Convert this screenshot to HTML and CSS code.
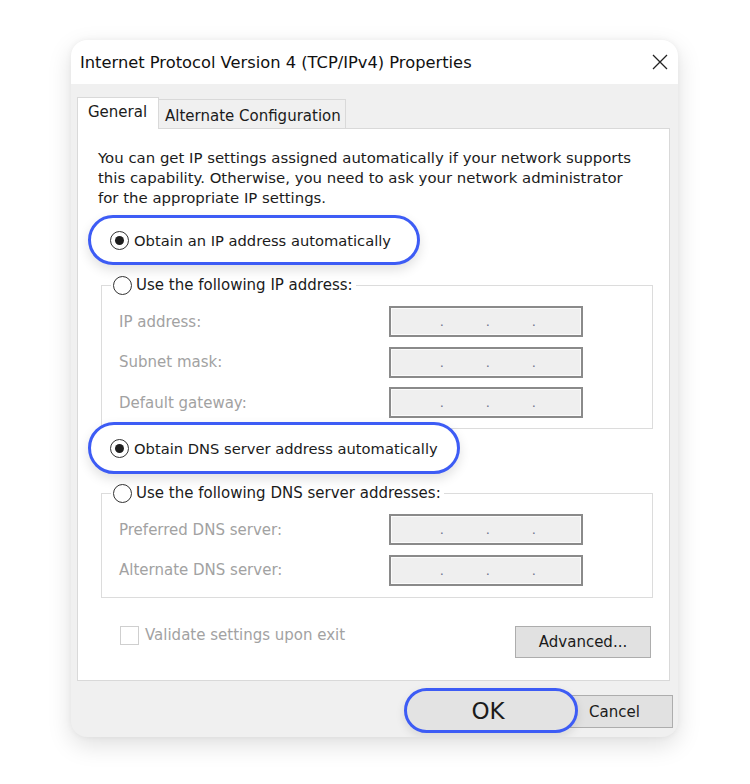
FILE: index.html
```html
<!DOCTYPE html>
<html>
<head>
<meta charset="utf-8">
<link rel="stylesheet" href="styles.css">
</head>
<body>
<div class="dialog">
  <div class="titlebar">
    <span class="title">Internet Protocol Version 4 (TCP/IPv4) Properties</span>
    <svg class="close" width="16" height="16" viewBox="0 0 16 16"><path d="M1 1 L15 15 M15 1 L1 15" stroke="#222" stroke-width="1.3" fill="none"/></svg>
  </div>
  <div class="body">
    <div class="tabs">
      <div class="tab tab-active">General</div>
      <div class="tab">Alternate Configuration</div>
    </div>
    <div class="panel">
      <p class="intro">You can get IP settings assigned automatically if your network supports<br>this capability. Otherwise, you need to ask your network administrator<br>for the appropriate IP settings.</p>

      <div class="pill pill-ip">
        <span class="radio radio-on"></span>
        <span class="pill-text">Obtain an IP address automatically</span>
      </div>

      <div class="group group-ip">
        <div class="legend">
          <span class="radio"></span>
          <span>Use the following IP address:</span>
        </div>
        <div class="field-row">
          <span class="label">IP address:</span>
          <div class="ipbox"><span>.</span><span>.</span><span>.</span></div>
        </div>
        <div class="field-row">
          <span class="label">Subnet mask:</span>
          <div class="ipbox"><span>.</span><span>.</span><span>.</span></div>
        </div>
        <div class="field-row">
          <span class="label">Default gateway:</span>
          <div class="ipbox"><span>.</span><span>.</span><span>.</span></div>
        </div>
      </div>

      <div class="pill pill-dns">
        <span class="radio radio-on"></span>
        <span class="pill-text">Obtain DNS server address automatically</span>
      </div>

      <div class="group group-dns">
        <div class="legend">
          <span class="radio"></span>
          <span>Use the following DNS server addresses:</span>
        </div>
        <div class="field-row">
          <span class="label">Preferred DNS server:</span>
          <div class="ipbox"><span>.</span><span>.</span><span>.</span></div>
        </div>
        <div class="field-row">
          <span class="label">Alternate DNS server:</span>
          <div class="ipbox"><span>.</span><span>.</span><span>.</span></div>
        </div>
      </div>

      <div class="bottom-row">
        <div class="check">
          <span class="checkbox"></span>
          <span class="check-label">Validate settings upon exit</span>
        </div>
        <div class="btn btn-adv">Advanced...</div>
      </div>
    </div>
    <div class="actions">
      <div class="btn-ok">OK</div>
      <div class="btn btn-cancel">Cancel</div>
    </div>
  </div>
</div>
</body>
</html>
```
FILE: styles.css
```css
* { box-sizing: border-box; }
html, body { margin: 0; padding: 0; background: #ffffff; }
body {
  font-family: "DejaVu Sans", "Noto Sans", sans-serif;
  font-size: 15px;
  color: #1b1b1b;
  width: 750px;
  height: 784px;
  overflow: hidden;
}
.dialog {
  margin: 40px 0 0 71px;
  width: 607px;
  height: 697px;
  border-radius: 16px;
  background: #f0f0f0;
  box-shadow: 0 8px 24px rgba(0,0,0,0.13), 0 0 6px rgba(0,0,0,0.05);
  overflow: hidden;
  display: flex;
  flex-direction: column;
}
.titlebar {
  height: 44px;
  background: #ffffff;
  display: flex;
  align-items: center;
  justify-content: space-between;
  padding: 0 10px 0 9px;
}
.title { font-size: 16.3px; color: #111; white-space: nowrap; }
.close { display: block; }
.body { padding: 13px 0 0 6px; display: flex; flex-direction: column; }
.tabs { display: flex; align-items: flex-end; height: 31px; }
.tab {
  height: 29px;
  width: 188px;
  border: 1px solid #d9d9d9;
  border-bottom: none;
  background: #f0f0f0;
  padding: 3px 0 0 6px;
  display: flex;
  align-items: center;
  margin-left: -1px;
  white-space: nowrap;
}
.tab-active {
  position: relative;
  z-index: 1;
  height: 32px;
  margin-bottom: -1px;
  margin-left: 0;
  width: 82px;
  background: #ffffff;
  padding: 0 0 3px 10px;
}
.panel {
  width: 593px;
  height: 553px;
  background: #ffffff;
  border: 1px solid #d9d9d9;
  display: flex;
  flex-direction: column;
}
.intro {
  margin: 19px 0 0 20px;
  line-height: 20px;
  font-size: 14.9px;
  white-space: nowrap;
}
.pill {
  position: relative;
  display: flex;
  align-items: center;
  margin-left: 10px;
  border: 3px solid #3d5cf5;
  border-radius: 27px;
  background: #ffffff;
  box-shadow: 0 5px 12px rgba(0,0,0,0.12);
  padding-left: 19px;
  white-space: nowrap;
}
.pill-ip { margin-top: 7px; width: 332px; height: 50px; }
.pill-dns { margin-top: -7px; width: 372px; height: 52px; }
.pill-text { margin-left: 5px; font-size: 14.7px; }
.radio {
  width: 19px;
  height: 19px;
  border-radius: 50%;
  border: 1.5px solid #333;
  background: #fff;
  display: flex;
  align-items: center;
  justify-content: center;
  flex: none;
}
.radio-on::after {
  content: "";
  width: 9px;
  height: 9px;
  border-radius: 50%;
  background: #1f1f1f;
}
.group {
  margin-left: 23px;
  width: 552px;
  border: 1px solid #dcdcdc;
  display: flex;
  flex-direction: column;
}
.group-ip { margin-top: 20px; height: 144px; }
.group-dns { margin-top: 19px; height: 105px; }
.legend {
  display: flex;
  align-items: center;
  gap: 4px;
  margin: -11px 0 0 9px;
  padding: 0 3px 0 2px;
  height: 20px;
  background: #fff;
  align-self: flex-start;
  white-space: nowrap;
}
.field-row {
  display: flex;
  align-items: center;
  height: 31px;
  padding-left: 17px;
  margin-top: 9.5px;
}
.group .legend + .field-row { margin-top: 11px; }
.label { width: 270px; color: #a2a2a2; white-space: nowrap; }
.ipbox {
  width: 194px;
  height: 31px;
  border: 2px solid #8a8a8a;
  box-shadow: inset 0 0 0 1px #fbfbfb;
  background: #efefef;
  display: grid;
  grid-template-columns: repeat(3, 46px);
  padding-left: 7px;
}
.ipbox span {
  text-align: right;
  color: #6f7590;
  font-size: 13px;
  line-height: 27px;
}
.bottom-row {
  display: flex;
  justify-content: space-between;
  align-items: flex-start;
  margin-top: 27px;
  padding: 0 18px 0 42px;
}
.check { display: flex; align-items: center; gap: 6px; height: 20px; }
.checkbox {
  width: 19px;
  height: 19px;
  border: 1.5px solid #cfcfcf;
  background: #fff;
}
.check-label { color: #a2a2a2; white-space: nowrap; }
.btn {
  background: #e1e1e1;
  border: 1px solid #adadad;
  display: flex;
  align-items: center;
  justify-content: center;
  white-space: nowrap;
}
.btn-adv { width: 136px; height: 32px; margin-top: 1px; }
.actions {
  display: flex;
  justify-content: flex-end;
  align-items: center;
  margin-top: 7px;
  padding-right: 5px;
  height: 45px;
}
.btn-ok {
  position: relative;
  z-index: 1;
  width: 174px;
  height: 45px;
  border: 3px solid #3d5cf5;
  border-radius: 23px;
  background: #e3e3e3;
  display: flex;
  align-items: center;
  justify-content: center;
  font-size: 23px;
  box-shadow: 0 4px 10px rgba(0,0,0,0.1);
  padding-right: 6px;
}
.btn-cancel {
  width: 103px;
  height: 33px;
  margin-left: -8px;
  padding-right: 14px;
  margin-top: 2px;
}
```
